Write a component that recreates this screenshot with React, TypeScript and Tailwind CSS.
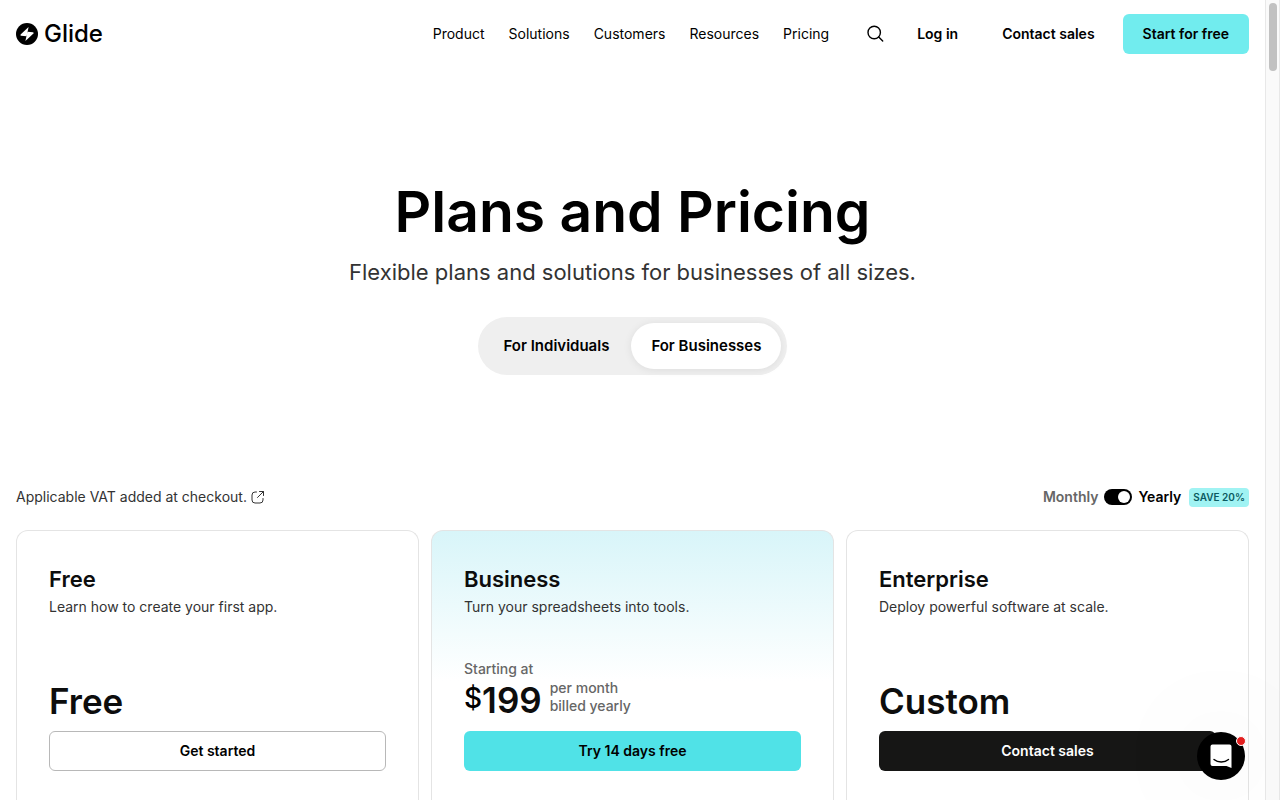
import { useState } from "react";
import clsx from "clsx";

type Plan = {
  name: string;
  description: string;
  price: string;
  monthly?: boolean;
  cta: string;
  cardClass: string;
  ctaClass: string;
};

const navLinks = ["Product", "Solutions", "Customers", "Resources", "Pricing"];

const plans: Plan[] = [
  {
    name: "Free",
    description: "Learn how to create your first app.",
    price: "Free",
    cta: "Get started",
    cardClass: "bg-white",
    ctaClass: "border border-[#b8b8b8] bg-white text-black",
  },
  {
    name: "Business",
    description: "Turn your spreadsheets into tools.",
    price: "199",
    monthly: true,
    cta: "Try 14 days free",
    cardClass: "bg-linear-to-b from-[#d8f5f9] to-white to-[150px]",
    ctaClass: "bg-[#50e2e7] text-black",
  },
  {
    name: "Enterprise",
    description: "Deploy powerful software at scale.",
    price: "Custom",
    cta: "Contact sales",
    cardClass: "bg-white",
    ctaClass: "bg-[#161615] text-white",
  },
];

const Logo = () => (
  <a href="#" className="flex items-center gap-1.5">
    <svg width="22" height="22" viewBox="0 0 22 22" aria-hidden="true">
      <circle cx="11" cy="11" r="11" fill="#000" />
      <path d="M12.6 4 4.6 11.6q-.6.9.4 1.100l5.600.5z" fill="#fff" />
      <path d="M9.400 18 17.400 10.400q.600-.900-.400-1.100l-5.600-.500z" fill="#fff" />
    </svg>
    <span className="text-2xl font-medium">Glide</span>
  </a>
);

const Header = () => (
  <header className="flex h-[68px] shrink-0 items-center justify-between text-sm">
    <Logo />

    <div className="flex items-center">
      <nav className="flex items-center gap-6">
        {navLinks.map((link) => (
          <a key={link} href="#">
            {link}
          </a>
        ))}
      </nav>

      <button type="button" aria-label="Search" className="ml-9">
        <svg
          width="20"
          height="20"
          viewBox="0 0 20 20"
          fill="none"
          stroke="currentColor"
          strokeWidth="1.4"
          strokeLinecap="round"
        >
          <circle cx="9.2" cy="8.5" r="6.2" />
          <path d="m13.7 13 4 4" />
        </svg>
      </button>

      <div className="ml-3 flex items-center gap-1 font-semibold">
        <a href="#" className="px-5">
          Log in
        </a>
        <a href="#" className="px-5">
          Contact sales
        </a>
        <button
          type="button"
          className="ml-1 h-10 rounded-md bg-[#71ecee] px-5"
        >
          Start for free
        </button>
      </div>
    </div>
  </header>
);

const PlanCard = ({ plan }: { plan: Plan }) => (
  <article
    className={clsx(
      "rounded-t-xl border border-b-0 border-[#e4e4e4] p-8",
      plan.cardClass
    )}
  >
    <h2 className="text-[22px] leading-8 font-semibold text-[#0d0d0d]">
      {plan.name}
    </h2>
    <p className="text-sm leading-6 text-[#333]">{plan.description}</p>

    <div className="mt-10 flex h-[72px] flex-col justify-between pb-2.5">
      <p className="h-5 text-sm font-medium text-[#666]">
        {plan.monthly && "Starting at"}
      </p>
      <div className="flex items-center">
        {plan.monthly && (
          <span className="pb-1 text-[28px] leading-9 font-medium">$</span>
        )}
        <span className="text-[35px] leading-10 font-semibold text-[#0d0d0d]">
          {plan.price}
        </span>
        {plan.monthly && (
          <span className="ml-2 pb-1.5 text-sm leading-[18px] font-medium text-[#666]">
            per month
            <br />
            billed yearly
          </span>
        )}
      </div>
    </div>

    <button
      type="button"
      className={clsx(
        "h-10 w-full rounded-md text-sm font-semibold",
        plan.ctaClass
      )}
    >
      {plan.cta}
    </button>
  </article>
);

const ChatLauncher = () => (
  <button
    type="button"
    aria-label="Open chat"
    className="absolute right-5 bottom-5 size-12 rounded-full bg-black shadow-[0_0_120px_rgba(0,0,0,0.12)]"
  >
    <svg width="48" height="48" viewBox="0 0 48 48" fill="none">
      <path
        d="M15.5 12.5h17a2 2 0 0 1 2 2V36l-5-2h-14a2 2 0 0 1-2-2V14.500a2 2 0 0 1 2-2z"
        fill="#fff"
      />
      <path
        d="M17 27.5c4 3.400 10.500 3.400 14.500 0"
        stroke="#000"
        strokeWidth="1.4"
        strokeLinecap="round"
      />
    </svg>
    <span className="absolute top-1 -right-px size-2.5 rounded-full border border-white bg-[#e32020]" />
  </button>
);

const App = () => {
  const [audience, setAudience] = useState("For Businesses");
  const [yearly, setYearly] = useState(true);

  return (
    <div className="flex h-screen overflow-hidden bg-white font-['Inter',sans-serif] text-black">
      <div className="relative flex min-w-0 flex-1 flex-col px-4">
        <Header />

        <main className="flex flex-1 flex-col">
          <section className="flex flex-col items-center pt-[108px] text-center">
            <h1 className="text-[57px] leading-[72px] font-semibold">
              Plans and Pricing
            </h1>
            <p className="mt-2 text-[22px] leading-8 text-[#333]">
              Flexible plans and solutions for businesses of all sizes.
            </p>

            <div className="mt-[29px] flex gap-0.5 rounded-full bg-[#efefef] p-1.5">
              {["For Individuals", "For Businesses"].map((item) => (
                <button
                  key={item}
                  type="button"
                  onClick={() => setAudience(item)}
                  className={clsx(
                    "h-[46px] rounded-full px-5 text-[15px] font-semibold",
                    audience === item &&
                      "bg-white shadow-[0_1px_8px_rgba(0,0,0,0.08)]"
                  )}
                >
                  {item}
                </button>
              ))}
            </div>
          </section>

          <div className="mt-28 flex h-5 items-center justify-between text-sm">
            <a href="#" className="flex items-center gap-1 text-[#333]">
              Applicable VAT added at checkout.
              <svg
                width="14"
                height="14"
                viewBox="0 0 14 14"
                fill="none"
                stroke="currentColor"
                strokeLinecap="round"
                strokeLinejoin="round"
              >
                <path d="M5.5 2H4a3 3 0 0 0-3 3v5a3 3 0 0 0 3 3h5a3 3 0 0 0 3-3V8.500" />
                <path d="M8.500 1.500h4v4M12.500 1.500l-6 6" />
              </svg>
            </a>

            <div className="flex items-center font-semibold">
              <label
                htmlFor="billing"
                className={yearly ? "text-[#666]" : "text-black"}
              >
                Monthly
              </label>
              <input
                id="billing"
                type="checkbox"
                role="switch"
                checked={yearly}
                onChange={(e) => setYearly(e.target.checked)}
                className="mx-1.5 h-4 w-7 appearance-none rounded-full bg-[#999] px-0.5 py-0.5 before:block before:size-3 before:rounded-full before:bg-white checked:bg-black checked:before:ml-auto"
              />
              <label
                htmlFor="billing"
                className={yearly ? "text-black" : "text-[#666]"}
              >
                Yearly
              </label>
              <span className="ml-2 rounded bg-[#a0f3f3] px-1 text-[10px] leading-[19px] text-[#0b5a60]">
                SAVE 20%
              </span>
            </div>
          </div>

          <section className="mt-[23px] grid flex-1 grid-cols-3 gap-3">
            {plans.map((plan) => (
              <PlanCard key={plan.name} plan={plan} />
            ))}
          </section>
        </main>

        <ChatLauncher />
      </div>

      {/* Scrollbar */}
      <div className="w-[15px] shrink-0 border-x border-[#e8e8e8] bg-[#fafafa] px-[3px] pt-[3px]">
        <div className="h-[68px] w-2 rounded-full bg-[#c1c1c1]" />
      </div>
    </div>
  );
};

export default App;
